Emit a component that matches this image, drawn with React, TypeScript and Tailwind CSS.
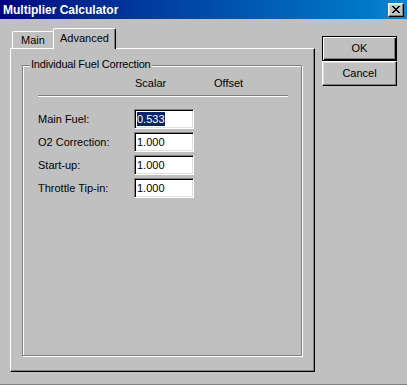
import React from "react";

const rows = [
  { label: "Main Fuel:", value: "0.533", selected: true },
  { label: "O2 Correction:", value: "1.000" },
  { label: "Start-up:", value: "1.000" },
  { label: "Throttle Tip-in:", value: "1.000" },
];

/* ---------- Caption close box ---------- */
function CloseBox() {
  return (
    <div className="w-[16px] h-[14px] bg-[#c0c0c0] border border-t-white border-l-white border-b-black border-r-black shadow-[inset_-1px_-1px_0_#808080,inset_1px_1px_0_#dfdfdf] grid place-items-center">
      <svg width="8" height="7" viewBox="0 0 8 7" shapeRendering="crispEdges">
        <path d="M0 0h2v1h-2zM6 0h2v1h-2zM1 1h2v1h-2zM5 1h2v1h-2zM2 2h4v1h-4zM3 3h2v1h-2zM2 4h4v1h-4zM1 5h2v1h-2zM5 5h2v1h-2zM0 6h2v1h-2zM6 6h2v1h-2z" fill="#000" />
      </svg>
    </div>
  );
}

/* ---------- Sunken edit box ---------- */
function Field({ value, selected }: { value: string; selected?: boolean }) {
  return (
    <div className="w-[60px] h-[20px] bg-white border border-t-[#808080] border-l-[#808080] border-b-white border-r-white shadow-[inset_1px_1px_0_#000,inset_-1px_-1px_0_#dfdfdf] flex items-center pl-[2px]">
      {selected ? <span className="bg-[#0a246a] text-white leading-[14px]">{value}</span> : value}
    </div>
  );
}

export default function App() {
  return (
    <div className="w-[407px] h-[385px] bg-[#c0c0c0] border-b border-[#808080] flex flex-col text-black text-[11px] leading-[13px] font-['Liberation_Sans',Arial,sans-serif]">
      {/* caption */}
      <div className="h-[19px] shrink-0 flex items-center justify-between pl-[3px] pr-[3px] bg-linear-to-r from-[#000080] to-[#1084d0]">
        <span className="text-white font-bold text-[12px] leading-[14px]">Multiplier Calculator</span>
        <CloseBox />
      </div>

      <div className="flex pl-[10px] pt-[9px]">
        {/* tab control */}
        <div className="flex flex-col w-[305px]">
          <div className="flex items-end h-[20px]">
            <div className="ml-[2px] w-[41px] h-[17px] border-t border-l border-white rounded-tl-[2px] flex items-center justify-center">
              Main
            </div>
            <div className="relative z-10 -mb-[1px] w-[63px] h-[21px] bg-[#c0c0c0] border-t border-l border-t-white border-l-white border-r border-r-black shadow-[inset_-1px_0_0_#808080] rounded-t-[2px] flex items-center justify-center pb-[2px]">
              Advanced
            </div>
          </div>

          <div className="h-[324px] border border-t-white border-l-white border-b-black border-r-black shadow-[inset_-1px_-1px_0_#808080]">
            {/* group box */}
            <div className="relative ml-[11px] mt-[16px] w-[280px] h-[291px] border border-[#808080] shadow-[inset_1px_1px_0_#fff,1px_1px_0_#fff]">
              <span className="absolute left-[7px] -top-[8px] px-[1px] bg-[#c0c0c0] tracking-[-0.2px]">Individual Fuel Correction</span>

              <div className="flex mt-[11px] pl-[112px]">
                <span className="w-[79px]">Scalar</span>
                <span>Offset</span>
              </div>

              <div className="ml-[15px] mt-[5px] w-[250px] h-[2px] border-t border-t-[#808080] border-b border-b-white" />

              <div className="mt-[12px] flex flex-col gap-[3px]">
                {rows.map((r) => (
                  <div key={r.label} className="flex items-center h-[20px] pl-[15px]">
                    <span className="w-[96px]">{r.label}</span>
                    <Field value={r.value} selected={r.selected} />
                  </div>
                ))}
              </div>
            </div>
          </div>
        </div>

        {/* buttons */}
        <div className="ml-[7px] mt-[8px] flex flex-col">
          <button className="w-[75px] h-[25px] bg-[#c0c0c0] border border-black shadow-[inset_1px_1px_0_#fff,inset_-1px_-1px_0_#000,inset_-2px_-2px_0_#808080]">
            OK
          </button>
          <button className="w-[75px] h-[25px] bg-[#c0c0c0] border border-t-white border-l-white border-b-black border-r-black shadow-[inset_-1px_-1px_0_#808080,inset_1px_1px_0_#dfdfdf]">
            Cancel
          </button>
        </div>
      </div>
    </div>
  );
}
